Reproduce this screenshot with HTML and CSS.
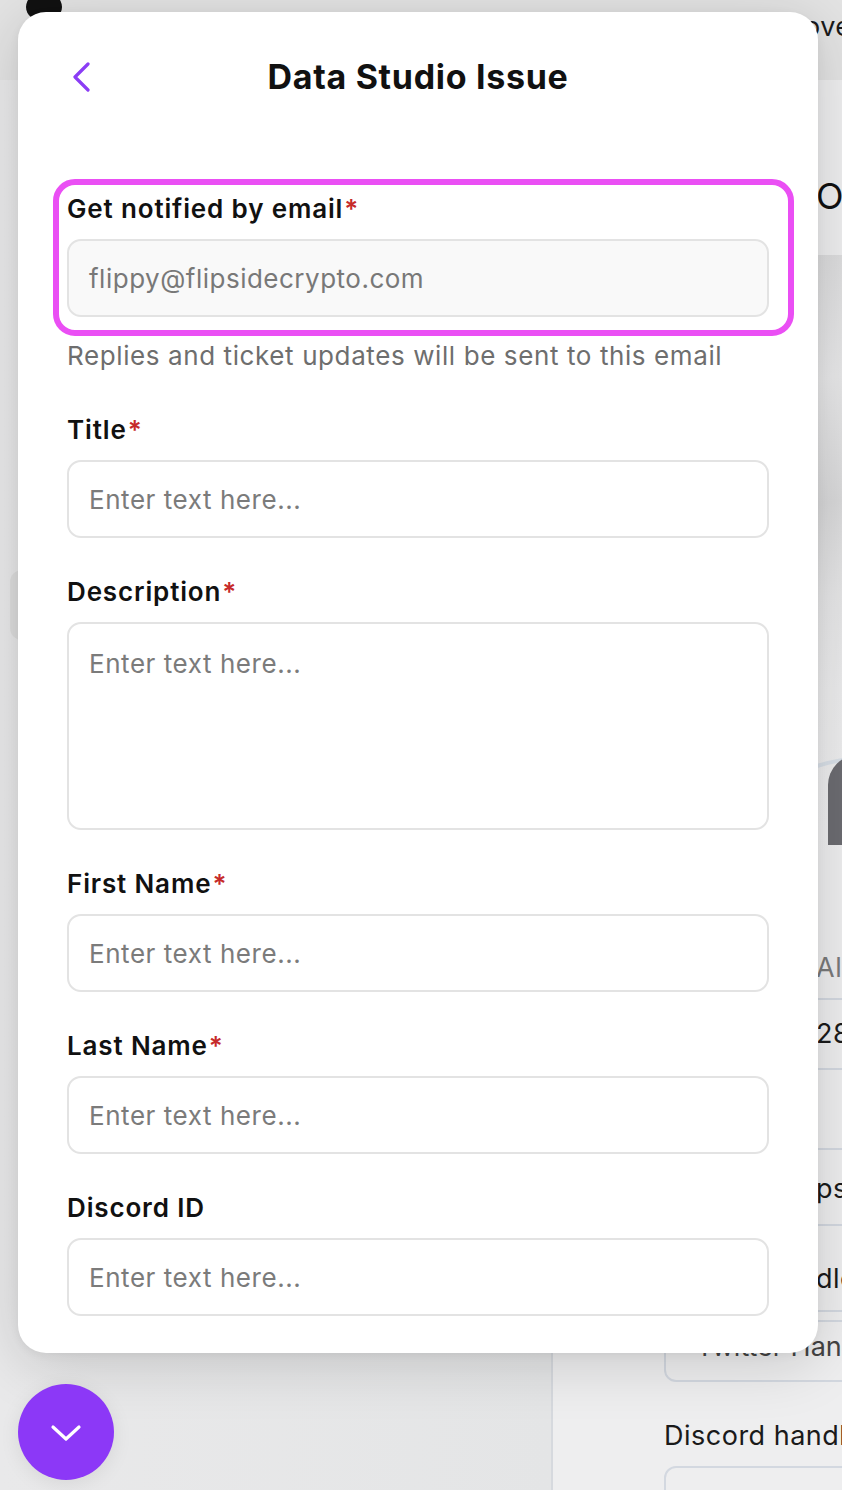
FILE: index.html
```html
<!DOCTYPE html>
<html lang="en">
<head>
<meta charset="utf-8">
<title>Data Studio Issue</title>
<link rel="stylesheet" href="styles.css">
</head>
<body>
<div class="page">
  <header class="topbar">
    <div class="logo"></div>
    <div class="top-peek">overview</div>
  </header>
  <div class="main">
    <div class="left">
      <div class="left-card"></div>
    </div>
    <div class="right">
      <div class="peek heading">Overview</div>
      <div class="hero"><div class="hero-ring"></div><div class="hero-avatar"></div></div>
      <div class="rows">
        <div class="row peek muted">All</div>
        <div class="row peek">28</div>
        <div class="row peek tall"></div>
        <div class="row peek">ps</div>
        <div class="row peek">dle</div>
      </div>
      <div class="bg-input">Twitter Handle</div>
      <div class="bg-label">Discord handle</div>
      <div class="bg-input"></div>
    </div>
  </div>

  <section class="modal">
    <div class="modal-head">
      <button class="back" aria-label="Back">
        <svg width="20" height="30" viewBox="0 0 20 30"><path d="M16 2 L3 15 L16 28" fill="none" stroke="#8b3df5" stroke-width="3.2" stroke-linecap="round" stroke-linejoin="round"/></svg>
      </button>
      <h1 class="modal-title">Data Studio Issue</h1>
    </div>
    <form class="form">
      <div class="field field-email">
        <div class="highlight"></div>
        <label class="label">Get notified by email<span class="req">*</span></label>
        <div class="input input-disabled">flippy@flipsidecrypto.com</div>
        <p class="help">Replies and ticket updates will be sent to this email</p>
      </div>
      <div class="field">
        <label class="label">Title<span class="req">*</span></label>
        <div class="input">Enter text here...</div>
      </div>
      <div class="field">
        <label class="label">Description<span class="req">*</span></label>
        <div class="input textarea">Enter text here...</div>
      </div>
      <div class="field">
        <label class="label">First Name<span class="req">*</span></label>
        <div class="input">Enter text here...</div>
      </div>
      <div class="field">
        <label class="label">Last Name<span class="req">*</span></label>
        <div class="input">Enter text here...</div>
      </div>
      <div class="field">
        <label class="label">Discord ID</label>
        <div class="input">Enter text here...</div>
      </div>
    </form>
  </section>

  <button class="fab" aria-label="Collapse">
    <svg width="32" height="20" viewBox="0 0 32 20"><path d="M3 4 L16 16 L29 4" fill="none" stroke="#fff" stroke-width="3.2" stroke-linecap="round" stroke-linejoin="round"/></svg>
  </button>
</div>
</body>
</html>
```

FILE: styles.css
```css
* { box-sizing: border-box; }
html, body { margin: 0; padding: 0; }
body {
  font-family: Inter, "Noto Sans", "Liberation Sans", sans-serif;
  background: #e9e9ea;
  overflow: hidden;
}
.page {
  position: relative;
  width: 842px;
  height: 1490px;
  overflow: hidden;
  display: flex;
  flex-direction: column;
  background: linear-gradient(180deg, #ebebec 0%, #e6e7e8 60%, #dedfe1 100%);
}
.topbar {
  height: 80px;
  flex: none;
  background: #e3e3e3;
  display: flex;
  align-items: flex-start;
  padding-left: 26px;
}
.logo {
  width: 36px;
  height: 30px;
  margin-top: -8px;
  background: #111;
  border-radius: 50%;
}
.top-peek {
  margin-left: auto;
  width: 38px;
  overflow: hidden;
  white-space: nowrap;
  font-size: 27px;
  line-height: 32px;
  margin-top: 11px;
  color: #1a1a1a;
  letter-spacing: 0.5px;
}
.main {
  flex: 1;
  display: flex;
}
.left {
  width: 553px;
  flex: none;
  border-right: 2px solid #d6d9de;
  background: linear-gradient(90deg, #e9e9ea 0%, #e4e5e6 100%);
}
.left-card {
  margin-top: 490px;
  margin-left: 10px;
  width: 300px;
  height: 70px;
  background: #dedede;
  border-radius: 12px;
}
.right {
  flex: 1;
  padding-left: 111px;
  display: flex;
  flex-direction: column;
  background: #eeeeef;
}
.peek { padding-left: 152px; white-space: nowrap; letter-spacing: 0.5px; }
.heading {
  margin-top: 96px;
  font-size: 36px;
  line-height: 40px;
  color: #111;
}
.hero {
  margin-top: 39px;
  margin-left: 152px;
  height: 595px;
  background: linear-gradient(170deg, #dcdcdd 0%, #e8e8e9 20%, #d9d9da 40%, #e6e6e7 55%, #ececed 70%, #f0f0f1 100%);
  position: relative;
  overflow: hidden;
}
.hero-ring {
  position: absolute;
  left: -140px;
  top: 500px;
  width: 400px;
  height: 400px;
  border-radius: 50%;
  border: 4px solid #d9e0e8;
}
.hero-avatar {
  position: absolute;
  left: 12px;
  top: 500px;
  width: 60px;
  height: 90px;
  border-radius: 30px 30px 0 0;
  background: #6c6c71;
}
.rows { margin-top: 80px; }
.row {
  height: 70px;
  border-bottom: 2px solid #d3d8e0;
  font-size: 27px;
  line-height: 32px;
  display: flex;
  align-items: center;
  color: #1a1a1a;
}
.row.muted { color: #7a7a7a; align-items: flex-end; padding-bottom: 14px; }
.row.tall { height: 80px; }
.row:nth-child(4) { height: 76px; padding-top: 4px; }
.row:last-child { height: 86px; padding-top: 22px; }
.bg-input {
  margin-top: 8px;
  height: 62px;
  border: 2px solid #d3d8e0;
  border-radius: 12px;
  font-size: 27px;
  line-height: 50px;
  padding-left: 30px;
  color: #444;
  white-space: nowrap;
}
.bg-label {
  margin-top: 38px;
  font-size: 27px;
  line-height: 32px;
  color: #1a1a1a;
  white-space: nowrap;
  letter-spacing: 0.5px;
}
.bg-label + .bg-input { margin-top: 14px; }

/* Modal */
.modal {
  position: absolute;
  top: 12px;
  left: 18px;
  width: 800px;
  background: #fff;
  border-radius: 28px;
  padding: 25px 49px 37px;
  box-shadow: 0 10px 60px rgba(0, 0, 0, 0.16), 0 2px 10px rgba(0, 0, 0, 0.05);
}
.modal-head {
  height: 80px;
  display: flex;
  align-items: center;
  justify-content: center;
  position: relative;
}
.back {
  position: absolute;
  left: 3px;
  top: 24px;
  width: 24px;
  height: 32px;
  padding: 0;
  border: 0;
  background: none;
  display: flex;
  align-items: center;
  justify-content: center;
}
.modal-title {
  margin: 0;
  font-size: 34px;
  line-height: 40px;
  font-weight: 700;
  color: #111;
  letter-spacing: 0.7px;
}
.form {
  margin-top: 76px;
  display: flex;
  flex-direction: column;
  gap: 38px;
}
.field {
  display: flex;
  flex-direction: column;
  position: relative;
}
.field-email { margin-bottom: 3px; }
.highlight {
  position: absolute;
  top: -14px;
  left: -14px;
  right: -25px;
  height: 157px;
  border: 6px solid #ea4ff4;
  border-radius: 22px;
  pointer-events: none;
}
.label {
  font-size: 26px;
  line-height: 32px;
  font-weight: 600;
  color: #111;
  margin-bottom: 14px;
  letter-spacing: 0.85px;
}
.req { color: #c62a2a; margin-left: 1px; }
.input {
  height: 78px;
  border: 2px solid #e3e3e3;
  border-radius: 14px;
  padding: 0 20px;
  font-size: 26px;
  line-height: 76px;
  color: #7b7b7b;
  background: #fff;
  letter-spacing: 0.55px;
}
.input-disabled { background: #f9f9f9; color: #787878; letter-spacing: 0.5px; }
.textarea {
  height: 208px;
  line-height: 32px;
  padding-top: 24px;
}
.help {
  margin: 22px 0 0;
  font-size: 26px;
  line-height: 34px;
  color: #6e6e6e;
  letter-spacing: 0.6px;
}

.fab {
  position: absolute;
  left: 18px;
  top: 1384px;
  width: 96px;
  height: 96px;
  border-radius: 50%;
  border: 0;
  padding: 0;
  background: #8c38f7;
  display: flex;
  align-items: center;
  justify-content: center;
  box-shadow: 0 4px 20px rgba(0, 0, 0, 0.08);
}
.fab svg { margin-top: 2px; }
```
